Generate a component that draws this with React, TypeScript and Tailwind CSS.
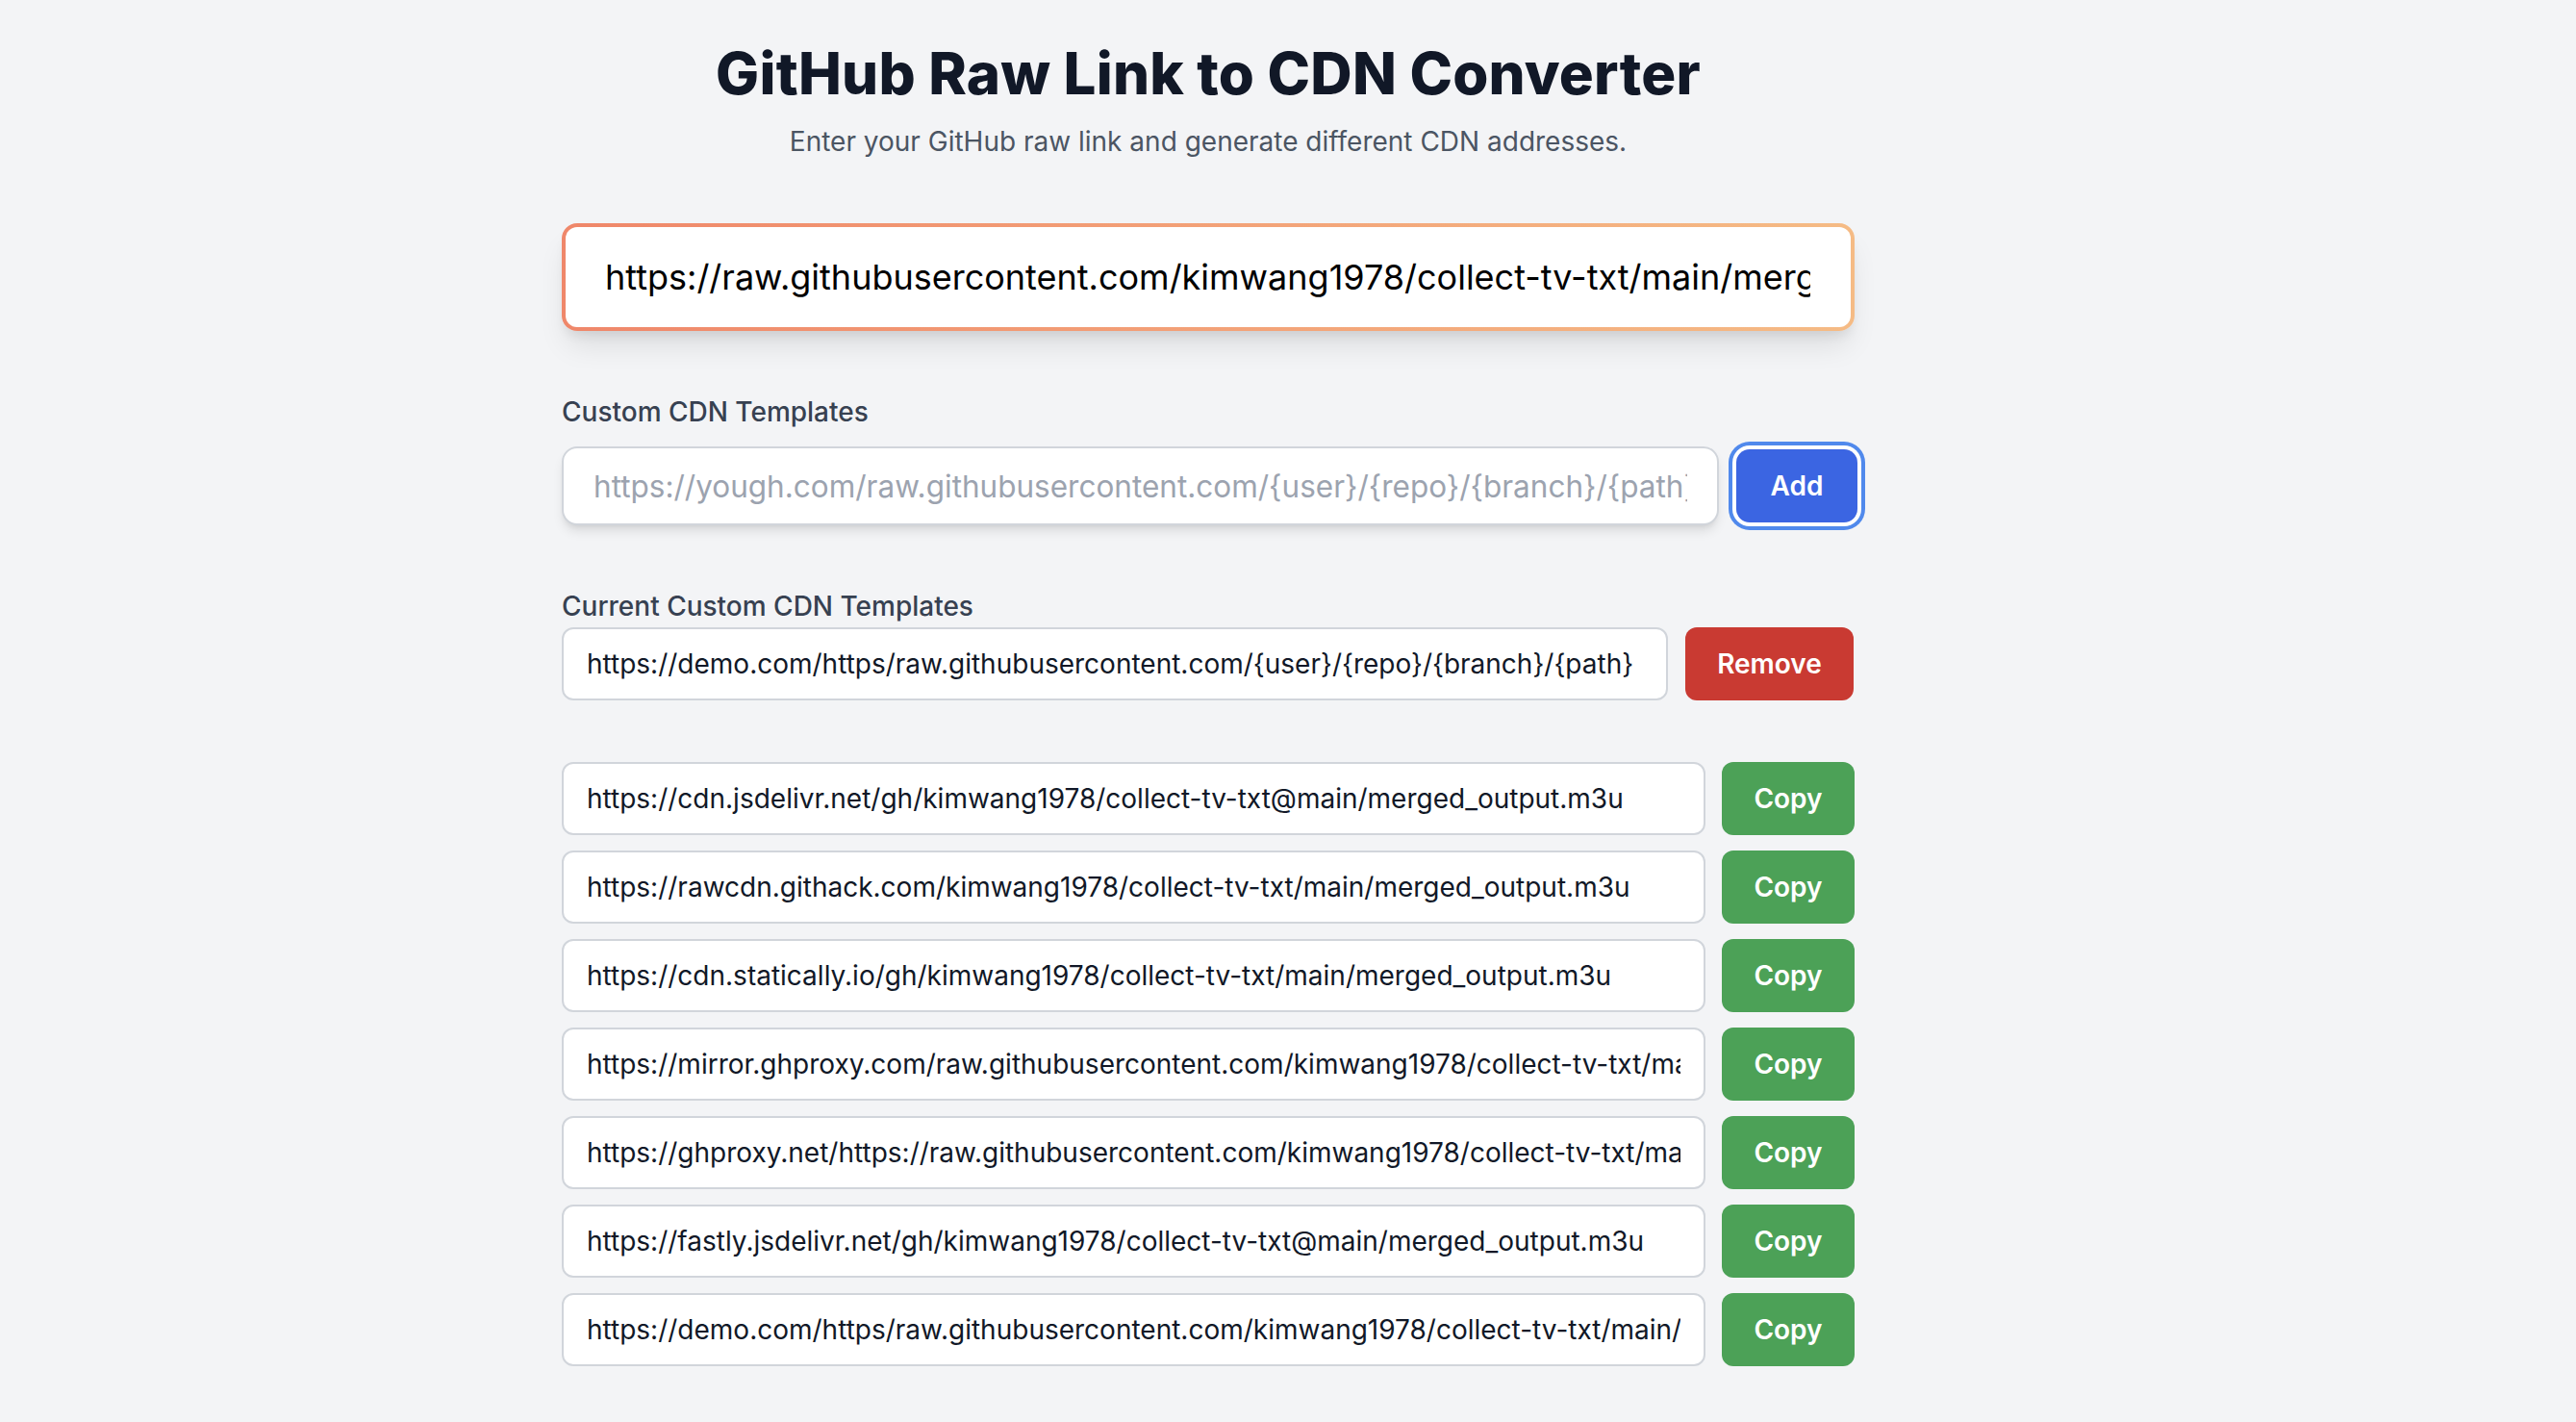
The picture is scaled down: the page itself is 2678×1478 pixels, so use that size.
import React from "react"

const sourceLink = "https://raw.githubusercontent.com/kimwang1978/collect-tv-txt/main/merged_output.m3u"

const cdnLinks = [
    "https://cdn.jsdelivr.net/gh/kimwang1978/collect-tv-txt@main/merged_output.m3u",
    "https://rawcdn.githack.com/kimwang1978/collect-tv-txt/main/merged_output.m3u",
    "https://cdn.statically.io/gh/kimwang1978/collect-tv-txt/main/merged_output.m3u",
    "https://mirror.ghproxy.com/raw.githubusercontent.com/kimwang1978/collect-tv-txt/main/merged_output.m3u",
    "https://ghproxy.net/https://raw.githubusercontent.com/kimwang1978/collect-tv-txt/main/merged_output.m3u",
    "https://fastly.jsdelivr.net/gh/kimwang1978/collect-tv-txt@main/merged_output.m3u",
    "https://demo.com/https/raw.githubusercontent.com/kimwang1978/collect-tv-txt/main/merged_output.m3u",
]

export default function App() {
    return (
        <div className="min-h-screen w-full bg-[#f3f4f6] flex justify-center pr-[166px] pt-[40px] pb-[40px]" style={{ fontFamily: "Inter, 'Noto Sans', sans-serif" }}>
            <div className="w-[1344px] flex flex-col">
                <h1 className="text-center text-[60px] leading-[72px] font-extrabold tracking-[0.2px] text-[#111827]">
                    GitHub Raw Link to CDN Converter
                </h1>
                <p className="mt-[15px] text-center text-[28px] leading-[40px] text-[#4b5563]">
                    Enter your GitHub raw link and generate different CDN addresses.
                </p>

                <div className="mt-[65px] rounded-[16px] p-[4px] bg-gradient-to-r from-[#ef876a] to-[#f5bb85] shadow-[0_20px_30px_-6px_rgba(0,0,0,0.1),0_8px_12px_-4px_rgba(0,0,0,0.08)]">
                    <input
                        readOnly
                        value={sourceLink}
                        className="w-full block rounded-[12px] bg-white pl-[41px] pr-[42px] py-[24px] text-[36px] leading-[56px] text-black outline-none"
                    />
                </div>

                <label className="mt-[64px] text-[28px] leading-[40px] font-medium text-[#374151]">Custom CDN Templates</label>
                <div className="mt-[16px] flex items-center gap-[18px]">
                    <input
                        placeholder="https://yough.com/raw.githubusercontent.com/{user}/{repo}/{branch}/{path}"
                        className="w-[1203px] h-[82px] shrink-0 rounded-[16px] border-2 border-[#d1d5db] bg-white px-[31px] text-[31.5px] text-black placeholder:text-[#9ca3af] outline-none shadow-[0_8px_12px_-2px_rgba(0,0,0,0.1),0_4px_6px_-4px_rgba(0,0,0,0.1)]"
                    />
                    <button className="w-[126px] h-[76px] shrink-0 rounded-[14px] bg-[#3b65e2] text-white text-[28px] font-semibold ring-4 ring-[#5089ec] ring-offset-4 ring-offset-white">
                        Add
                    </button>
                </div>

                <label className="mt-[64px] text-[28px] leading-[40px] font-medium text-[#374151]">Current Custom CDN Templates</label>
                <div className="mt-[2px] flex items-center gap-[18px]">
                    <input
                        readOnly
                        value="https://demo.com/https/raw.githubusercontent.com/{user}/{repo}/{branch}/{path}"
                        className="w-[1150px] h-[76px] shrink-0 rounded-[12px] border-2 border-[#d1d5db] bg-white px-[24px] text-[28px] text-[#111827] outline-none"
                    />
                    <button className="w-[175px] h-[76px] shrink-0 rounded-[12px] bg-[#c93a32] text-white text-[28px] font-semibold">
                        Remove
                    </button>
                </div>

                <div className="mt-[64px] flex flex-col gap-[16px]">
                    {cdnLinks.map((link) => (
                        <div key={link} className="flex items-center gap-[17px]">
                            <input
                                readOnly
                                value={link}
                                className="flex-1 min-w-0 h-[76px] rounded-[12px] border-2 border-[#d1d5db] bg-white px-[24px] text-[28px] text-[#111827] outline-none"
                            />
                            <button className="w-[138px] h-[76px] shrink-0 rounded-[12px] bg-[#4ca157] text-white text-[28px] font-semibold">
                                Copy
                            </button>
                        </div>
                    ))}
                </div>
            </div>
        </div>
    )
}
